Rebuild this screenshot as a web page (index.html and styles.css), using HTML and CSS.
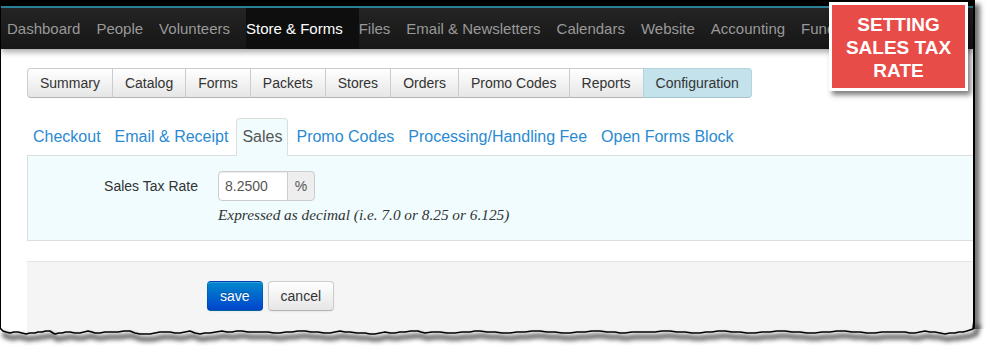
FILE: index.html
```html
<!DOCTYPE html>
<html lang="en">
<head>
<meta charset="utf-8">
<title>Store &amp; Forms – Configuration – Sales</title>
<link rel="stylesheet" href="styles.css">
</head>
<body>
<div class="page">
  <div class="shot">
    <header class="topbar">
      <nav class="navbar">
        <a class="nav-item">Dashboard</a>
        <a class="nav-item">People</a>
        <a class="nav-item">Volunteers</a>
        <a class="nav-item active">Store &amp; Forms</a>
        <a class="nav-item">Files</a>
        <a class="nav-item">Email &amp; Newsletters</a>
        <a class="nav-item">Calendars</a>
        <a class="nav-item">Website</a>
        <a class="nav-item">Accounting</a>
        <a class="nav-item">Fundraising</a>
      </nav>
    </header>
    <main class="content">
      <div class="btn-group">
        <a class="seg">Summary</a>
        <a class="seg">Catalog</a>
        <a class="seg">Forms</a>
        <a class="seg">Packets</a>
        <a class="seg">Stores</a>
        <a class="seg">Orders</a>
        <a class="seg">Promo Codes</a>
        <a class="seg">Reports</a>
        <a class="seg active">Configuration</a>
      </div>
      <ul class="tabs">
        <li><a class="tab">Checkout</a></li>
        <li><a class="tab">Email &amp; Receipt</a></li>
        <li><a class="tab active">Sales</a></li>
        <li><a class="tab">Promo Codes</a></li>
        <li><a class="tab">Processing/Handling Fee</a></li>
        <li><a class="tab">Open Forms Block</a></li>
      </ul>
      <div class="tab-panel">
        <div class="form-row">
          <label class="control-label" for="rate">Sales Tax Rate</label>
          <div class="controls">
            <div class="input-append">
              <input id="rate" class="rate" type="text" value="8.2500">
              <span class="add-on">%</span>
            </div>
            <p class="help">Expressed as decimal (i.e. 7.0 or 8.25 or 6.125)</p>
          </div>
        </div>
      </div>
      <div class="form-actions">
        <button class="btn primary">save</button>
        <button class="btn">cancel</button>
      </div>
    </main>
  </div>
  <div class="callout">SETTING<br>SALES TAX<br>RATE</div>
  <svg class="torn" width="991" height="34" viewBox="0 0 991 34" aria-hidden="true">
    <defs>
      <filter id="blur" x="-5%" y="-100%" width="110%" height="300%"><feGaussianBlur stdDeviation="2.2"/></filter>
    </defs>
    <path fill="#fff" d="M0,8 L3,11 L6,12 L10,13 L14,12 L18,12 L22,13 L26,14 L30,13 L35,13 L38,12 L42,12 L46,11 L50,11 L53,13 L55,14 L59,13 L62,13 L66,12 L70,12 L75,13 L80,13 L84,12 L88,11 L92,12 L95,13 L100,13 L105,12 L112,12 L118,12 L124,11 L130,11 L135,13 L140,14 L145,14 L150,14 L155,13 L160,12 L165,12 L170,12 L175,13 L180,13 L185,12 L190,11 L195,13 L200,14 L205,13 L210,13 L216,12 L222,11 L227,12 L232,12 L237,11 L242,11 L248,12 L255,12 L262,12 L268,12 L274,13 L280,13 L286,12 L292,12 L298,11 L305,11 L311,12 L318,12 L324,13 L330,13 L335,12 L340,11 L345,12 L350,12 L357,13 L365,13 L370,14 L375,14 L380,13 L385,12 L390,13 L395,13 L400,12 L405,12 L411,11 L418,11 L421,12 L425,13 L432,12 L440,12 L447,13 L455,13 L462,12 L470,12 L475,11 L480,11 L487,12 L495,12 L502,13 L510,13 L517,12 L525,12 L532,11 L540,11 L547,12 L555,12 L562,13 L570,13 L577,12 L585,12 L592,11 L600,11 L607,12 L615,12 L620,13 L625,13 L632,12 L640,12 L647,12 L655,12 L662,11 L670,11 L677,12 L685,12 L692,13 L700,13 L706,12 L712,12 L718,11 L725,11 L732,12 L740,12 L747,13 L755,13 L762,12 L770,12 L777,11 L785,11 L792,12 L800,12 L807,13 L815,13 L822,12 L830,12 L837,11 L845,11 L852,12 L860,12 L867,13 L875,13 L882,12 L890,12 L897,12 L905,12 L910,13 L915,13 L920,12 L925,11 L930,12 L935,12 L940,13 L945,14 L950,13 L955,13 L959,12 L963,12 L967,11 L970,10 L973,9 L975,9 L991,9 L991,34 L0,34 Z"/>
    <path fill="none" stroke="#333" stroke-width="5" opacity="0.75" filter="url(#blur)" transform="translate(3,5)" d="M0,8 L3,11 L6,12 L10,13 L14,12 L18,12 L22,13 L26,14 L30,13 L35,13 L38,12 L42,12 L46,11 L50,11 L53,13 L55,14 L59,13 L62,13 L66,12 L70,12 L75,13 L80,13 L84,12 L88,11 L92,12 L95,13 L100,13 L105,12 L112,12 L118,12 L124,11 L130,11 L135,13 L140,14 L145,14 L150,14 L155,13 L160,12 L165,12 L170,12 L175,13 L180,13 L185,12 L190,11 L195,13 L200,14 L205,13 L210,13 L216,12 L222,11 L227,12 L232,12 L237,11 L242,11 L248,12 L255,12 L262,12 L268,12 L274,13 L280,13 L286,12 L292,12 L298,11 L305,11 L311,12 L318,12 L324,13 L330,13 L335,12 L340,11 L345,12 L350,12 L357,13 L365,13 L370,14 L375,14 L380,13 L385,12 L390,13 L395,13 L400,12 L405,12 L411,11 L418,11 L421,12 L425,13 L432,12 L440,12 L447,13 L455,13 L462,12 L470,12 L475,11 L480,11 L487,12 L495,12 L502,13 L510,13 L517,12 L525,12 L532,11 L540,11 L547,12 L555,12 L562,13 L570,13 L577,12 L585,12 L592,11 L600,11 L607,12 L615,12 L620,13 L625,13 L632,12 L640,12 L647,12 L655,12 L662,11 L670,11 L677,12 L685,12 L692,13 L700,13 L706,12 L712,12 L718,11 L725,11 L732,12 L740,12 L747,13 L755,13 L762,12 L770,12 L777,11 L785,11 L792,12 L800,12 L807,13 L815,13 L822,12 L830,12 L837,11 L845,11 L852,12 L860,12 L867,13 L875,13 L882,12 L890,12 L897,12 L905,12 L910,13 L915,13 L920,12 L925,11 L930,12 L935,12 L940,13 L945,14 L950,13 L955,13 L959,12 L963,12 L967,11 L970,10 L973,9 L975,0"/>
    <path fill="none" stroke="#000" stroke-width="1.6" stroke-linejoin="round" d="M0,8 L3,11 L6,12 L10,13 L14,12 L18,12 L22,13 L26,14 L30,13 L35,13 L38,12 L42,12 L46,11 L50,11 L53,13 L55,14 L59,13 L62,13 L66,12 L70,12 L75,13 L80,13 L84,12 L88,11 L92,12 L95,13 L100,13 L105,12 L112,12 L118,12 L124,11 L130,11 L135,13 L140,14 L145,14 L150,14 L155,13 L160,12 L165,12 L170,12 L175,13 L180,13 L185,12 L190,11 L195,13 L200,14 L205,13 L210,13 L216,12 L222,11 L227,12 L232,12 L237,11 L242,11 L248,12 L255,12 L262,12 L268,12 L274,13 L280,13 L286,12 L292,12 L298,11 L305,11 L311,12 L318,12 L324,13 L330,13 L335,12 L340,11 L345,12 L350,12 L357,13 L365,13 L370,14 L375,14 L380,13 L385,12 L390,13 L395,13 L400,12 L405,12 L411,11 L418,11 L421,12 L425,13 L432,12 L440,12 L447,13 L455,13 L462,12 L470,12 L475,11 L480,11 L487,12 L495,12 L502,13 L510,13 L517,12 L525,12 L532,11 L540,11 L547,12 L555,12 L562,13 L570,13 L577,12 L585,12 L592,11 L600,11 L607,12 L615,12 L620,13 L625,13 L632,12 L640,12 L647,12 L655,12 L662,11 L670,11 L677,12 L685,12 L692,13 L700,13 L706,12 L712,12 L718,11 L725,11 L732,12 L740,12 L747,13 L755,13 L762,12 L770,12 L777,11 L785,11 L792,12 L800,12 L807,13 L815,13 L822,12 L830,12 L837,11 L845,11 L852,12 L860,12 L867,13 L875,13 L882,12 L890,12 L897,12 L905,12 L910,13 L915,13 L920,12 L925,11 L930,12 L935,12 L940,13 L945,14 L950,13 L955,13 L959,12 L963,12 L967,11 L970,10 L973,9 L974,0"/>
  </svg>
</div>
</body>
</html>
```

FILE: styles.css
```css
* { box-sizing: border-box; }

body {
  margin: 0;
  background: #fff;
  font-family: "Liberation Sans", Arial, sans-serif;
}

.page {
  position: relative;
  width: 991px;
  height: 354px;
  overflow: hidden;
}

.shot {
  width: 975px;
  height: 338px;
  border-left: 1px solid #000;
  border-right: 2px solid #000;
  background: #fff;
  box-shadow: 5px 4px 5px rgba(0, 0, 0, 0.55);
  overflow: hidden;
}

/* top navigation */
.topbar {
  background: #000;
  padding-top: 6px;
}

.navbar {
  position: relative;
  z-index: 1;
  display: flex;
  height: 43px;
  padding-left: 6px;
  border-top: 2px solid #2c8096;
  background: linear-gradient(#242424, #161616);
  white-space: nowrap;
  overflow: hidden;
  box-shadow: 0 3px 6px rgba(0, 0, 0, 0.35);
}

.nav-item {
  flex: none;
  padding-right: 16px;
  color: #999;
  font-size: 15px;
  line-height: 41px;
}

.nav-item.active {
  color: #fff;
  background: #0e0e0e;
}

/* content */
.content {
  padding: 19px 0 0 26px;
}

.btn-group {
  display: flex;
}

.seg {
  padding: 4px 12px;
  margin-left: -1px;
  font-size: 14px;
  line-height: 20px;
  color: #333;
  background: linear-gradient(#ffffff, #e6e6e6);
  border: 1px solid #ccc;
  border-bottom-color: #b3b3b3;
}

.seg:first-child {
  margin-left: 0;
  border-radius: 4px 0 0 4px;
}

.seg:last-child {
  border-radius: 0 4px 4px 0;
}

.seg.active {
  background: #c3e2eb;
  border-color: #b5d3dc;
  border-bottom-color: #a6c4cd;
}

/* tabs */
.tabs {
  display: flex;
  margin: 20px 0 0;
  padding: 0;
  list-style: none;
  border-bottom: 1px solid #ddd;
}

.tab {
  display: block;
  margin-right: 2px;
  margin-bottom: -1px;
  padding: 8px 5px;
  font-size: 16px;
  line-height: 20px;
  color: #2a8ad2;
  border: 1px solid transparent;
  border-radius: 4px 4px 0 0;
}

.tab.active {
  color: #555;
  background: #f0fcfe;
  border-color: #ddd;
  border-bottom-color: #f0fcfe;
}

.tab-panel {
  padding: 15px 0;
  background: #f0fcfe;
  border: 1px solid #ddd;
  border-top: 0;
  border-right: 0;
}

.form-row {
  display: grid;
  grid-template-columns: 170px 1fr;
  column-gap: 20px;
}

.control-label {
  padding-top: 5px;
  text-align: right;
  font-size: 14px;
  line-height: 20px;
  color: #333;
}

.input-append {
  display: flex;
}

.rate {
  width: 70px;
  height: 30px;
  margin: 0;
  padding: 4px 6px;
  font-family: "Liberation Sans", Arial, sans-serif;
  font-size: 14px;
  line-height: 20px;
  color: #555;
  background: #fff;
  border: 1px solid #ccc;
  border-radius: 4px 0 0 4px;
  box-shadow: inset 0 1px 1px rgba(0, 0, 0, 0.075);
}

.add-on {
  width: 28px;
  height: 30px;
  margin-left: -1px;
  padding: 4px 0;
  text-align: center;
  font-size: 14px;
  line-height: 20px;
  color: #555;
  background: #eee;
  border: 1px solid #ccc;
  border-radius: 0 4px 4px 0;
}

.help {
  margin: 4px 0 0;
  font-family: "Liberation Serif", "Times New Roman", serif;
  font-style: italic;
  font-size: 15.3px;
  line-height: 20px;
  color: #333;
}

/* actions */
.form-actions {
  display: flex;
  gap: 5px;
  margin-top: 20px;
  padding: 19px 0 40px 180px;
  background: #f5f5f5;
  border-top: 1px solid #e5e5e5;
}

.btn {
  margin: 0;
  padding: 4px 12px;
  font-family: "Liberation Sans", Arial, sans-serif;
  font-size: 14px;
  line-height: 20px;
  color: #333;
  background: linear-gradient(#ffffff, #e6e6e6);
  border: 1px solid #ccc;
  border-bottom-color: #b3b3b3;
  border-radius: 4px;
  box-shadow: inset 0 1px 0 rgba(255, 255, 255, 0.2), 0 1px 2px rgba(0, 0, 0, 0.05);
}

.btn.primary {
  color: #fff;
  background: linear-gradient(#0088cc, #0044cc);
  border-color: rgba(0, 0, 0, 0.1) rgba(0, 0, 0, 0.1) rgba(0, 0, 0, 0.25);
  text-shadow: 0 -1px 0 rgba(0, 0, 0, 0.25);
}

/* annotation callout over the screenshot */
.callout {
  position: absolute;
  z-index: 5;
  left: 829px;
  top: 2px;
  width: 139px;
  padding: 8px 0 6px;
  text-align: center;
  font-weight: bold;
  font-size: 19px;
  line-height: 23px;
  color: #fff;
  background: #e84c48;
  border: 3px solid #fff;
  box-shadow: 3px 4px 5px rgba(0, 0, 0, 0.5);
}

/* torn bottom edge of the screenshot */
.torn {
  position: absolute;
  left: 0;
  top: 320px;
  display: block;
}
```
